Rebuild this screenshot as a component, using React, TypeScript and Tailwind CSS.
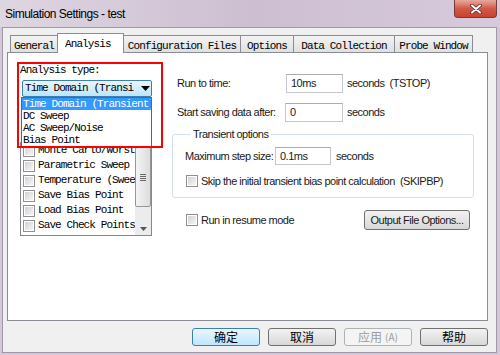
import React from "react";

const mono = "font-['Liberation_Mono',monospace] text-[11px] tracking-[-0.9px]";
const sans = "font-['Liberation_Sans',Arial,sans-serif] text-[11px] tracking-[-0.5px] text-[#1a1a1a]";

const tabs = [
  { label: "General", w: "w-[48px]" },
  { label: "Analysis", w: "w-[67px]", active: true },
  { label: "Configuration Files", w: "w-[118px]" },
  { label: "Options", w: "w-[54px]" },
  { label: "Data Collection", w: "w-[102px]" },
  { label: "Probe Window", w: "w-[79px]" },
];

const options = [
  "Monte Carlo/Worst Case",
  "Parametric Sweep",
  "Temperature (Sweep)",
  "Save Bias Point",
  "Load Bias Point",
  "Save Check Points",
];

function CheckBox() {
  return (
    <span className="block h-[12px] w-[12px] shrink-0 border border-[#8f8f8f] bg-white p-[1px]">
      <span className="block h-full w-full bg-linear-to-br from-[#d2d2d2] to-[#f6f6f6]" />
    </span>
  );
}

function TextBox({ value, w, h }: { value: string; w: string; h: string }) {
  return (
    <div
      className={`${w} ${h} flex shrink-0 items-center border border-[#c3c7cf] border-t-[#a9acb3] bg-white pl-[4px] ${sans}`}
    >
      {value}
    </div>
  );
}

function WinButton({
  children,
  variant = "normal",
}: {
  children: React.ReactNode;
  variant?: "normal" | "default" | "disabled";
}) {
  const look =
    variant === "default"
      ? "border-[#3c7fb1] bg-linear-to-b from-[#eaf6fd] to-[#bee6fd] text-black"
      : variant === "disabled"
        ? "border-[#adb2b5] bg-[#f4f4f4] text-[#9c9c9c]"
        : "border-[#707070] bg-linear-to-b from-[#f2f2f2] to-[#d8d8d8] text-black";
  return (
    <div
      className={`flex h-[18px] w-[68px] items-center justify-center rounded-[3px] border ${look} font-['Noto_Sans_CJK_SC',sans-serif] text-[12px] leading-none`}
    >
      {children}
    </div>
  );
}

export default function App() {
  return (
    <div className="h-[355px] w-[500px] overflow-hidden bg-[#d4c8d8]">
      {/* title bar */}
      <div className="flex h-[27px] items-start bg-linear-to-r from-[#ded6e1] via-[#cdbfd1] to-[#d8cadd]">
        <div className="pl-[5px] pt-[5px] font-['Liberation_Sans',Arial,sans-serif] text-[12px] tracking-[-0.5px] text-black">
          Simulation Settings - test
        </div>
        <div className="ml-auto mr-[3px] flex h-[18px] w-[43px] items-center justify-center rounded-b-[4px] border border-t-0 border-[#7a3a36] bg-linear-to-b from-[#e9a99b] via-[#d05a47] to-[#c8432f]">
          <svg width="12" height="10" viewBox="0 0 12 10">
            <path d="M2 1.5 L10 8.5 M10 1.5 L2 8.5" stroke="#5a2a28" strokeWidth="3.6" strokeLinecap="round" />
            <path d="M2 1.5 L10 8.5 M10 1.5 L2 8.5" stroke="#ffffff" strokeWidth="2" strokeLinecap="round" />
          </svg>
        </div>
      </div>

      {/* client area */}
      <div className="ml-[2px] h-[326px] w-[495px] border border-[#9f98a6] bg-[#f0f0f0]">
        {/* tabs */}
        <div className="flex h-[25px] items-end pl-[7px]">
          {tabs.map((t) =>
            t.active ? (
              <div
                key={t.label}
                className={`relative z-10 -ml-px h-[20px] ${t.w} border border-b-0 border-[#898c95] bg-white pl-[7px] pt-[2px] text-black ${mono}`}
              >
                {t.label}
              </div>
            ) : (
              <div
                key={t.label}
                className={`-ml-px mb-[1px] h-[17px] ${t.w} border border-b-0 border-[#898c95] bg-linear-to-b from-[#f3f3f3] to-[#e0e0e0] text-center pt-[2px] text-black ${mono} first:ml-0`}
              >
                {t.label}
              </div>
            )
          )}
        </div>

        {/* tab panel */}
        <div className="relative -mt-px ml-[4px] flex h-[269px] w-[481px] border border-[#898c95] bg-white">
          {/* left column */}
          <div className="relative ml-[9px] mt-[9px] w-[146px]">
            <div className={`ml-[3px] mt-[2px] h-[12px] leading-[12px] text-black ${mono}`}>
              Analysis type:
            </div>
            <div className="ml-[5px] mt-[4px] flex h-[17px] w-[130px] items-center overflow-hidden rounded-[2px] border border-[#3c7fb1] bg-linear-to-b from-[#eaf6fd] to-[#bfe4f8]">
              <div className={`w-[116px] overflow-hidden whitespace-nowrap pl-[2px] text-black ${mono}`}>
                Time Domain (Transi
              </div>
              <svg width="9" height="5" viewBox="0 0 9 5" className="ml-[2px]">
                <path d="M0 0 L9 0 L4.5 5 Z" fill="#000" />
              </svg>
            </div>

            {/* options list */}
            <div className="ml-[3px] mt-[45px] flex h-[94px] w-[132px] border border-[#828790] bg-white">
              <div className="w-[114px] overflow-hidden">
                {options.map((o) => (
                  <div key={o} className="flex h-[15px] items-center gap-[3px] pl-[2px]">
                    <CheckBox />
                    <span className={`whitespace-nowrap text-black ${mono}`}>{o}</span>
                  </div>
                ))}
              </div>
              <div className="flex w-[16px] flex-col bg-[#ececec]">
                <div className="mt-[4px] flex h-[60px] items-center justify-center rounded-[2px] border border-[#979797] bg-linear-to-r from-[#f4f4f4] to-[#dcdcdc]">
                  <div className="flex flex-col gap-[1px]">
                    <span className="block h-px w-[6px] bg-[#6a6a6a]" />
                    <span className="block h-px w-[6px] bg-[#6a6a6a]" />
                    <span className="block h-px w-[6px] bg-[#6a6a6a]" />
                    <span className="block h-px w-[6px] bg-[#6a6a6a]" />
                  </div>
                </div>
                <div className="mt-auto mb-[4px] flex justify-center">
                  <svg width="7" height="4" viewBox="0 0 7 4">
                    <path d="M0 0 L7 0 L3.5 4 Z" fill="#555" />
                  </svg>
                </div>
              </div>
            </div>

            {/* open dropdown */}
            <div className="absolute left-[4px] top-[35px] z-20 h-[50px] w-[131px] overflow-hidden border border-[#646464] bg-white">
              {["Time Domain (Transient)", "DC Sweep", "AC Sweep/Noise", "Bias Point"].map((o, i) => (
                <div
                  key={o}
                  className={`h-[12px] whitespace-nowrap pl-[1px] leading-[12px] ${mono} ${
                    i === 0 ? "bg-[#3399ff] text-white" : "text-black"
                  }`}
                >
                  {o}
                </div>
              ))}
            </div>

            {/* red highlight box */}
            <div className="pointer-events-none absolute left-0 top-0 z-30 h-[86px] w-[146px] border-2 border-[#ff0000]" />
          </div>

          {/* right column */}
          <div className="ml-[9px] w-[302px]">
            <div className="mt-[21px] flex h-[19px] items-center pl-[5px]">
              <span className={`w-[109px] ${sans}`}>Run to time:</span>
              <TextBox value="10ms" w="w-[57px]" h="h-[19px]" />
              <span className={`ml-[4px] ${sans}`}>seconds&nbsp; (TSTOP)</span>
            </div>
            <div className="mt-[10px] flex h-[19px] items-center pl-[5px]">
              <span className={`w-[108px] ${sans}`}>Start saving data after:</span>
              <TextBox value="0" w="w-[58px]" h="h-[19px]" />
              <span className={`ml-[4px] ${sans}`}>seconds</span>
            </div>

            <fieldset className="mt-[6px] rounded-[3px] border border-[#d5dfe5] pb-[10px] pl-[12px]">
              <legend className={`ml-[5px] px-[3px] leading-[12px] ${sans}`}>Transient options</legend>
              <div className="mt-[7px] flex h-[18px] items-center">
                <span className={`w-[90px] ${sans}`}>Maximum step size:</span>
                <TextBox value="0.1ms" w="w-[56px]" h="h-[18px]" />
                <span className={`ml-[5px] ${sans}`}>seconds</span>
              </div>
              <div className="ml-[1px] mt-[10px] flex h-[12px] items-center gap-[3px]">
                <CheckBox />
                <span className={`whitespace-nowrap ${sans}`}>
                  Skip the initial transient bias point calculation&nbsp; (SKIPBP)
                </span>
              </div>
            </fieldset>

            <div className="mt-[12px] flex h-[20px] items-center pl-[14px] pr-[4px]">
              <CheckBox />
              <span className={`ml-[3px] ${sans}`}>Run in resume mode</span>
              <div
                className={`ml-auto flex h-[20px] w-[106px] items-center justify-center rounded-[3px] border border-[#707070] bg-linear-to-b from-[#f2f2f2] to-[#d8d8d8] ${sans}`}
              >
                Output File Options...
              </div>
            </div>
          </div>
        </div>

        {/* dialog buttons */}
        <div className="ml-[189px] mt-[7px] flex gap-[8px]">
          <WinButton variant="default">确定</WinButton>
          <WinButton>取消</WinButton>
          <WinButton variant="disabled">
            应用<span className="ml-[3px] text-[10px]">(A)</span>
          </WinButton>
          <WinButton>帮助</WinButton>
        </div>
      </div>
    </div>
  );
}
